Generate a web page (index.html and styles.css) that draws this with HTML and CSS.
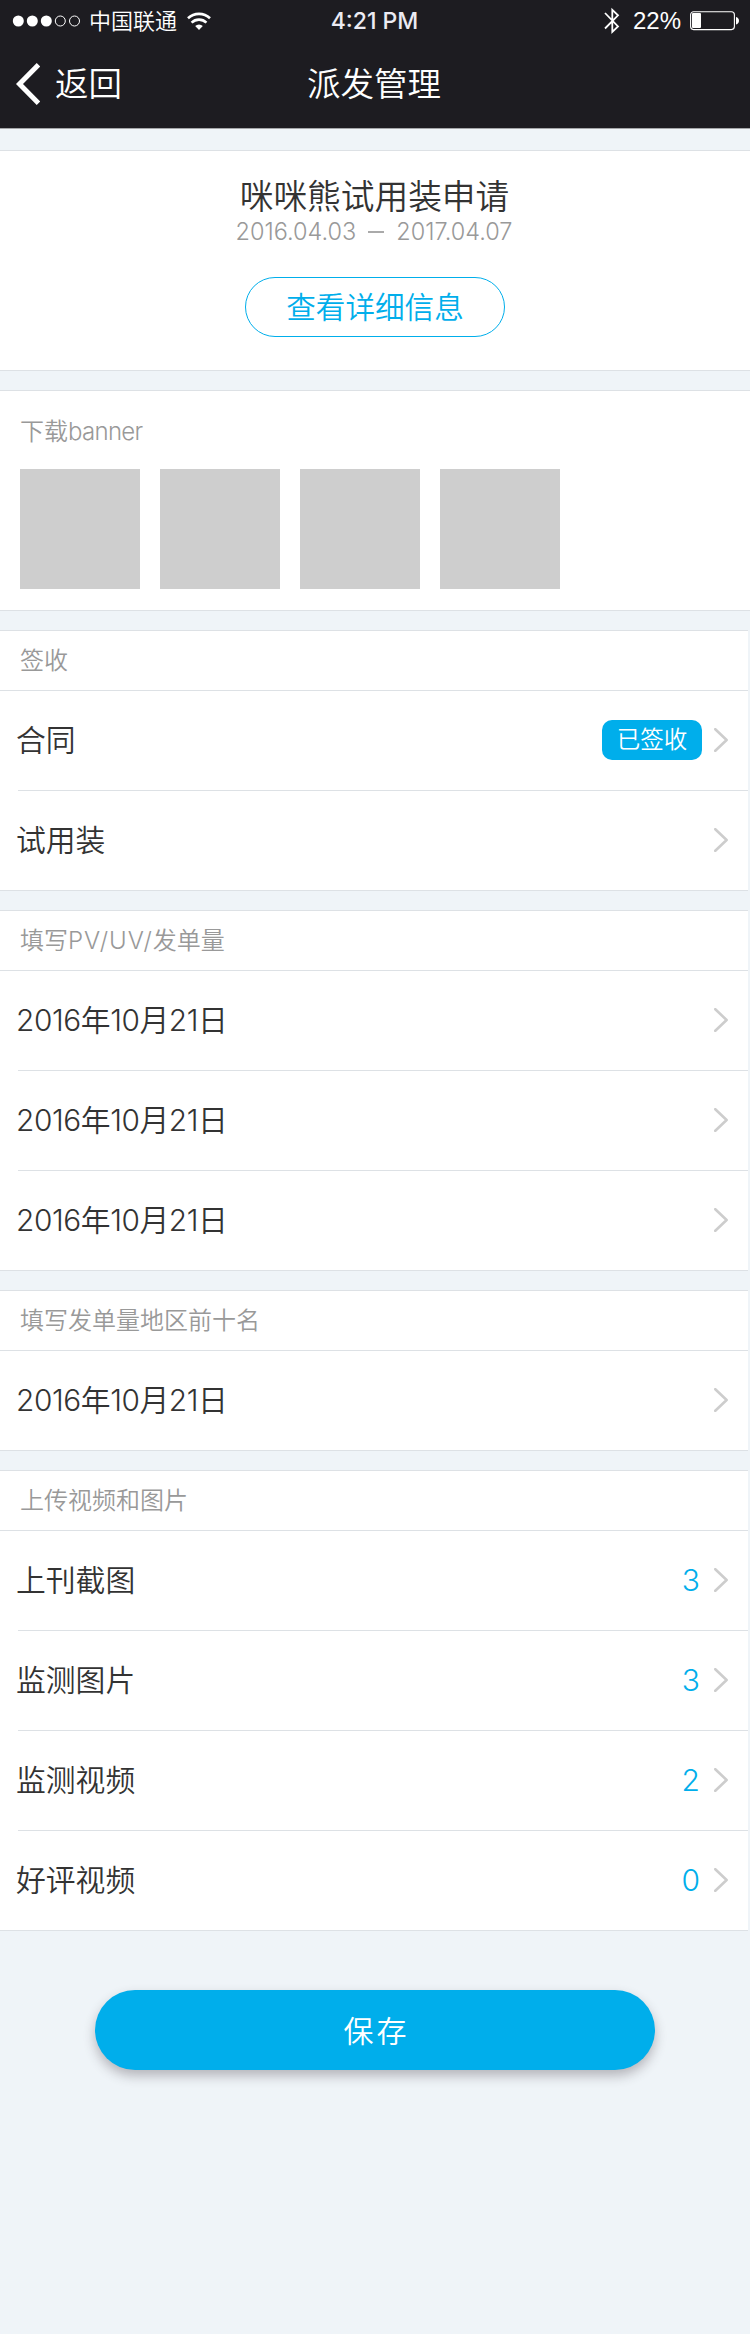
FILE: index.html
```html
<!DOCTYPE html>
<html lang="zh-CN">
<head>
<meta charset="utf-8">
<title>派发管理</title>
<link rel="stylesheet" href="styles.css">
</head>
<body>
<svg class="defs" width="0" height="0" aria-hidden="true">
  <symbol id="chevron" viewBox="0 0 14 24"><path d="M1.3 1.2 12.6 12 1.3 22.8" fill="none" stroke="#cdcdcd" stroke-width="2.6" stroke-linecap="round" stroke-linejoin="round"/></symbol>
</svg>
<header class="top">
  <div class="status">
    <div class="status-left">
      <svg width="70" height="14" viewBox="0 0 70 14"><g fill="#fff"><circle cx="6.300" cy="7" r="5.500"/><circle cx="20.300" cy="7" r="5.500"/><circle cx="34.300" cy="7" r="5.500"/></g><g fill="none" stroke="#fff"><circle cx="48.300" cy="7" r="5"/><circle cx="62.500" cy="7" r="5"/></g></svg>
      <span class="carrier">中国联通</span>
      <svg class="wifi" width="24" height="20" viewBox="0 0 24 20"><path d="M12 19 8.200 15a5.500 5.500 0 0 1 7.600 0z" fill="#fff"/><path d="M4.600 11.600a10.600 10.600 0 0 1 14.800 0M1 7.300a15.800 15.800 0 0 1 22 0" fill="none" stroke="#fff" stroke-width="2.600"/></svg>
    </div>
    <div class="clock">4:21 PM</div>
    <div class="status-right">
      <svg width="16" height="28" viewBox="0 0 16 28"><path d="M1 6 14 19.500 8.300 25V2.800L14 8.300 1 21.500" fill="none" stroke="#fff" stroke-width="1.800"/></svg>
      <span class="percent">22%</span>
      <svg width="50" height="20" viewBox="0 0 50 20"><rect x=".6" y=".7" width="43.800" height="17.900" rx="3" fill="none" stroke="#fff" stroke-width="1.100"/><rect x="2" y="2" width="9" height="15" rx="1" fill="#fff"/><path d="M46 6c4 1 4 6.500 0 7.500z" fill="#fff"/></svg>
    </div>
  </div>
  <nav class="nav">
    <a class="back"><svg width="24" height="42" viewBox="0 0 24 42"><path d="M22.500 1.800 3.500 21 22.500 40.200" fill="none" stroke="#fff" stroke-width="5"/></svg><span>返回</span></a>
    <h1 class="nav-title">派发管理</h1>
  </nav>
</header>
<main>
  <section class="card intro">
    <h2 class="intro-title">咪咪熊试用装申请</h2>
    <p class="intro-date"><span>2016.04.03</span><i class="dash"></i><span>2017.04.07</span></p>
    <a class="detail">查看详细信息</a>
  </section>
  <section class="card banners">
    <h3 class="label">下载<span class="tight">banner</span></h3>
    <div class="thumbs"><div class="thumb"></div><div class="thumb"></div><div class="thumb"></div><div class="thumb"></div></div>
  </section>
  <section class="card list">
    <h3 class="label">签收</h3>
    <div class="row"><span class="name">合同</span><span class="badge">已签收</span><svg class="chev"><use href="#chevron"/></svg></div>
    <div class="row"><span class="name">试用装</span><svg class="chev"><use href="#chevron"/></svg></div>
  </section>
  <section class="card list">
    <h3 class="label">填写<span class="latin">PV/UV/</span>发单量</h3>
    <div class="row"><span class="name date">2016年10月21日</span><svg class="chev"><use href="#chevron"/></svg></div>
    <div class="row"><span class="name date">2016年10月21日</span><svg class="chev"><use href="#chevron"/></svg></div>
    <div class="row"><span class="name date">2016年10月21日</span><svg class="chev"><use href="#chevron"/></svg></div>
  </section>
  <section class="card list">
    <h3 class="label">填写发单量地区前十名</h3>
    <div class="row"><span class="name date">2016年10月21日</span><svg class="chev"><use href="#chevron"/></svg></div>
  </section>
  <section class="card list">
    <h3 class="label">上传视频和图片</h3>
    <div class="row"><span class="name">上刊截图</span><span class="count">3</span><svg class="chev"><use href="#chevron"/></svg></div>
    <div class="row"><span class="name">监测图片</span><span class="count">3</span><svg class="chev"><use href="#chevron"/></svg></div>
    <div class="row"><span class="name">监测视频</span><span class="count">2</span><svg class="chev"><use href="#chevron"/></svg></div>
    <div class="row"><span class="name">好评视频</span><span class="count">0</span><svg class="chev"><use href="#chevron"/></svg></div>
  </section>
  <button class="save">保存</button>
</main>
</body>
</html>
```
FILE: styles.css
```css
* { box-sizing: border-box; margin: 0; padding: 0; }
body { width: 750px; min-height: 2334px; background: #eff4f8; color: #333; font-family: Inter, "Noto Sans CJK SC DemiLight", "Noto Sans CJK SC", sans-serif; font-weight: 350; }
h1, h2, h3 { font-weight: 350; }
svg { display: block; flex: none; }
.defs { position: absolute; }
.top { height: 129px; background: #1d1c21; border-bottom: 1px solid #a5a6a9; color: #fff; }
.status { height: 41px; display: grid; grid-template-columns: 1fr auto 1fr; align-items: center; padding: 0 10px 0 12px; }
.status-left, .status-right { display: flex; align-items: center; }
.status-right { justify-content: flex-end; }
.carrier { margin-left: 7px; font-size: 22px; line-height: 42px; }
.wifi { margin-left: 10px; }
.clock { margin-right: 3px; font: 500 23px/40px Inter, sans-serif; color: #ecebf3; }
.percent { margin: 0 9px 0 13px; font: 24px/40px "Liberation Sans", sans-serif; }
.nav { height: 87px; display: grid; grid-template-columns: 1fr auto 1fr; padding: 0 18px 0 16px; line-height: 87px; }
.back { display: flex; align-items: center; height: 86px; gap: 15px; font-size: 33.500px; }
.nav-title { font-size: 33.500px; }
.card { background: #fff; border: solid #dde1e5; border-width: 1px 0; margin-top: 19px; }
.intro { height: 221px; margin-top: 21px; display: flex; flex-direction: column; align-items: center; padding-top: 25px; }
.intro-title { margin-right: 1px; font-size: 33.700px; line-height: 42px; }
.intro-date { display: flex; align-items: center; height: 26px; margin: 1px 2px 0 0; font-size: 23.500px; line-height: 26px; color: #999; }
.dash { width: 16px; height: 2px; margin: 0 12px; background: #aaa; }
.detail { width: 260px; height: 60px; margin-top: 32px; border: 1px solid #00aeeb; border-radius: 30px; color: #00aeeb; font-size: 29.600px; line-height: 59px; text-align: center; }
.label { padding-left: 20px; height: 60px; border-bottom: 1px solid #dde1e5; font-size: 24px; line-height: 60px; color: #999; }
.latin { letter-spacing: .9px; }
.tight { letter-spacing: -.7px; }
.banners { height: 221px; }
.banners .label { height: 78px; border: 0; line-height: 82px; }
.thumbs { display: flex; gap: 20px; padding-left: 20px; }
.thumb { width: 120px; height: 120px; background: #cecece; }
.list { width: 748px; }
.row { display: flex; align-items: center; height: 100px; margin-left: 18px; padding: 0 20px 1px 0; }
.row + .row { border-top: 1px solid #dde1e5; }
.label + .row { height: 99px; }
.name { flex: 1; margin: -1px 0 0 -2px; font-size: 29.800px; line-height: 96px; }
.date { letter-spacing: -.4px; }
.badge { width: 100px; height: 40px; border-radius: 10px; background: #00aeeb; color: #fff; font-size: 23.500px; line-height: 40px; text-align: center; }
.count { margin-right: 2px; color: #00aeeb; font-size: 30px; }
.chev { width: 14px; height: 24px; margin-left: 12px; }
.save { display: block; width: 560px; height: 80px; margin: 59px 0 0 95px; border: 0; border-radius: 40px; background: #00aeeb; box-shadow: 0 6px 12px rgba(60, 50, 60, .32); color: #fff; font: 350 30px/76px "Noto Sans CJK SC DemiLight", "Noto Sans CJK SC", sans-serif; letter-spacing: 3px; padding: 0 0 3px 3px; }
```
